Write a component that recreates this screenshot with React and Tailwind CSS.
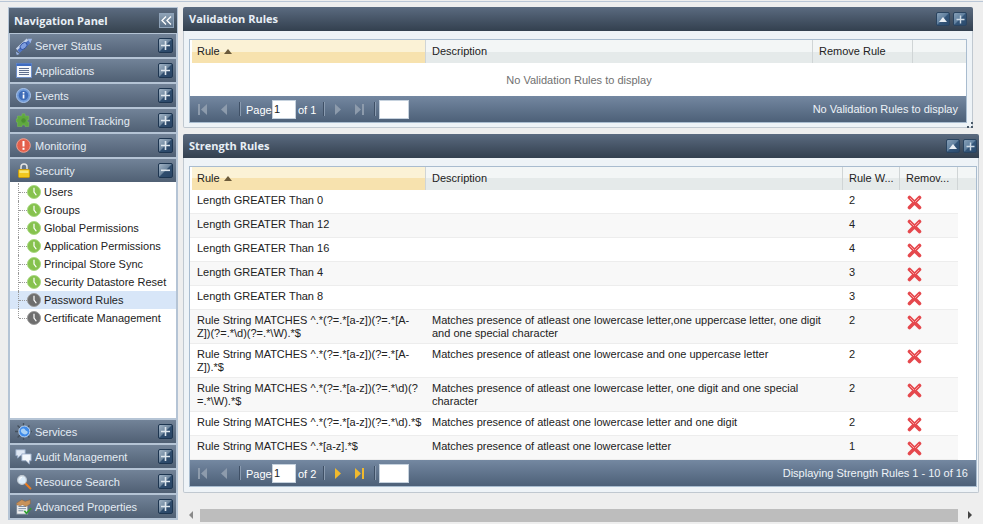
import React from 'react';

const sans = { fontFamily: '"Liberation Sans", Arial, sans-serif' };
const titleFont = { fontFamily: '"Open Sans", sans-serif' };

// little drawings for the accordion headers
const ServerIcon = () => (
  <svg width="18" height="18" viewBox="0 0 20 20">
    <path d="M3 15 L15 4" stroke="#c7d4ea" strokeWidth="6" />
    <path d="M4 16 L16 5" stroke="#4f74c4" strokeWidth="4" />
    <ellipse cx="9.500" cy="10" rx="3" ry="4.500" transform="rotate(45 9.500 10)" fill="#7f9ee0" stroke="#2e4f9e" />
    <path d="M14 2 L19 2 L17 7 Z" fill="#9db7ea" />
    <path d="M1 16 L5 19 L2 20 Z" fill="#9db7ea" />
  </svg>
);
const AppsIcon = () => (
  <svg width="16" height="15" viewBox="0 0 16 15">
    <rect x="0.500" y="0.500" width="15" height="14" fill="#f4f7fc" stroke="#6f8fc8" />
    <rect x="0.500" y="0.500" width="15" height="2.500" fill="#3f6cc0" />
    <path d="M3 5.500H13M3 7.500H13M3 9.500H13M3 11.500H13" stroke="#5f6f8f" />
  </svg>
);
const InfoIcon = () => (
  <svg width="15" height="15" viewBox="0 0 15 15">
    <circle cx="7.500" cy="7.500" r="7" fill="#6f9ad8" stroke="#a9c4ec" />
    <circle cx="7.500" cy="7.500" r="4.800" fill="#3f6cb8" />
    <rect x="6.700" y="6.500" width="1.700" height="4" fill="#fff" />
    <rect x="6.700" y="4" width="1.700" height="1.600" fill="#fff" />
  </svg>
);
const PuzzleIcon = () => (
  <svg width="15" height="15" viewBox="0 0 20 20">
    <path d="M8 1h4v3h5v5h-2v3h2v6H12v-2H8v2H2v-6H0V8h2V4h6z" fill="#5fa83f" stroke="#7fc05a" strokeWidth="0.600" />
    <circle cx="10" cy="10" r="3" fill="#4c9030" />
  </svg>
);
const AlertIcon = () => (
  <svg width="15" height="15" viewBox="0 0 15 15">
    <circle cx="7.500" cy="7.500" r="6.800" fill="#e4604c" stroke="#f2a090" />
    <rect x="6.500" y="3" width="2" height="5.500" fill="#fff" />
    <rect x="6.500" y="9.800" width="2" height="2" fill="#fff" />
  </svg>
);
const LockIcon = () => (
  <svg width="12" height="15" viewBox="0 0 12 15">
    <path d="M3 7V4a3 3 0 0 1 6 0v3" fill="none" stroke="#e4e4e4" strokeWidth="1.500" />
    <rect x="0.500" y="6.500" width="11" height="8" rx="1" fill="#f2c81e" stroke="#c89a10" />
    <rect x="1.500" y="7.500" width="9" height="2.500" fill="#fae878" />
  </svg>
);
const GlobeIcon = () => (
  <svg width="17" height="17" viewBox="0 0 20 20">
    <path d="M3 3L17 17M17 3L3 17M10 0V20M0 10H20" stroke="#44505e" strokeWidth="1.600" />
    <circle cx="11" cy="10" r="6.500" fill="#3f8ae8" stroke="#d5e6fa" />
    <path d="M7 8c2-2 4-2 5 0s3 1 3 3-3 3-5 2-4-3-3-5z" fill="#a8d0f5" />
  </svg>
);
const ChatIcon = () => (
  <svg width="17" height="17" viewBox="0 0 20 20">
    <path d="M1 2h11v7H6l-3 3V9H1z" fill="#dfe8f4" stroke="#93a8c4" />
    <path d="M8 7h11v8h-2v4l-4-4H8z" fill="#f4f8fc" stroke="#93a8c4" />
  </svg>
);
const SearchIcon = () => (
  <svg width="16" height="16" viewBox="0 0 20 20">
    <path d="M11 11L18 18" stroke="#e87a20" strokeWidth="2.600" strokeLinecap="round" />
    <circle cx="7.500" cy="7.500" r="5.500" fill="#dcecfa" stroke="#c0c8d0" strokeWidth="1.400" />
    <path d="M4.500 7a3.500 3.500 0 0 1 3-3" stroke="#fff" strokeWidth="1.400" fill="none" />
  </svg>
);
const AdvancedIcon = () => (
  <svg width="17" height="17" viewBox="0 0 20 20">
    <rect x="2" y="6" width="13" height="13" fill="#f2f2f2" stroke="#7a8a9a" />
    <path d="M4 10h9M4 12.500h9M4 15h6" stroke="#6a7f9a" />
    <path d="M2 6l6-4 4 2 6-2v5l-5 3-4-2-3 1-4-1z" fill="#c8925a" stroke="#8a5a30" strokeWidth="0.500" />
    <path d="M11 15l2.500 3L19 12" fill="none" stroke="#30a030" strokeWidth="2" />
  </svg>
);

const ExpandBtn = ({ minus }) => (
  <span className="flex h-[15px] w-[15px] items-center justify-center rounded-[2px] border border-[#1d3550] bg-[linear-gradient(135deg,#a2b4c6_0%,#6e869e_48%,#2f4d6e_52%,#2a4566_100%)]">
    <svg width="9" height="9" viewBox="0 0 9 9">
      {minus ? <rect x="0" y="3.500" width="9" height="1.600" fill="#dfe7ee" /> : <path d="M3.700 0h1.600v3.700H9v1.600H5.300V9H3.700V5.300H0V3.700h3.700z" fill="#dfe7ee" />}
    </svg>
  </span>
);

const NavHeader = ({ icon: Icon, label, open }) => (
  <div className="flex h-[23px] items-center bg-gradient-to-b from-[#728398] to-[#506074] pl-[3px] pr-[3px]">
    <span className="flex w-[21px] shrink-0 items-center justify-center"><Icon /></span>
    <span className="ml-[1px] flex-1 pt-[2px] text-[11px] text-[#e4ecf4]">{label}</span>
    <ExpandBtn minus={open} />
  </div>
);

const ClockIcon = ({ gray }) => (
  <svg width="14" height="14" viewBox="0 0 15 15" className="shrink-0">
    <circle cx="7.500" cy="7.500" r="7" fill={gray ? '#6e6e6e' : '#86c24e'} stroke={gray ? '#9a9a9a' : '#a8d880'} />
    <path d="M7.500 3V7.500L10 11" fill="none" stroke="#fff" strokeWidth="1.300" />
  </svg>
);

const TreeRow = ({ label, gray, active, last }) => (
  <div className={`relative flex h-[18px] items-center pl-[9px] ${active ? 'bg-[#d8e6f8]' : ''}`}>
    <span className={`absolute left-[8px] top-0 border-l border-dotted border-[#999] ${last ? 'h-[9px]' : 'h-[18px]'}`} />
    <span className="w-[8px] border-t border-dotted border-[#999]" />
    <ClockIcon gray={gray} />
    <span className="ml-[3px] text-[11px] text-[#222]">{label}</span>
  </div>
);

const HeadCell = ({ label, sorted, w }) => (
  <div className={`flex h-[23px] items-center border-r border-[#d0d5d6] text-[11px] text-[#222] ${w} ${sorted ? 'bg-[linear-gradient(#fbf2d6_50%,#f7e2ae_50%)] pl-[5px]' : 'bg-[linear-gradient(#f3f6f6_50%,#e5eaea_50%)] pl-[6px]'}`}>
    {label}
    {sorted && <svg width="8" height="5" viewBox="0 0 8 5" className="ml-[4px]"><path d="M0 5L4 0L8 5Z" fill="#6b5a3a" /></svg>}
  </div>
);

const Arrow = ({ dir, bar, color }) => (
  <svg width="11" height="13" viewBox="0 0 11 13" className="shrink-0">
    {dir === 'left' ? <path d="M9 1V12L3 6.500Z" fill={color} /> : <path d="M2 1V12L8 6.500Z" fill={color} />}
    {bar && (dir === 'left' ? <rect x="0" y="1" width="2" height="11" fill={color} /> : <rect x="9" y="1" width="2" height="11" fill={color} />)}
  </svg>
);

const Sep = () => <span className="h-[14px] w-[1px] shrink-0 bg-[#3f5066] shadow-[1px_0_0_#8a9bb0]" />;

const Pager = ({ pages, status, nextOn }) => {
  const off = '#8d9bac';
  const on = '#f0b92e';
  return (
    <div className="flex h-[26px] items-center bg-gradient-to-b from-[#7488a1] to-[#4d6078] pl-[8px] pr-[8px] text-[11px] text-white">
      <Arrow dir="left" bar color={off} />
      <span className="w-[9px]" />
      <Arrow dir="left" color={off} />
      <span className="w-[10px]" />
      <Sep />
      <span className="ml-[6px] w-[25px] pt-[2px]">Page</span>
      <span className="ml-[1px] flex h-[19px] w-[24px] items-center border border-[#c6d2de] bg-white pl-[1px] text-[#222]">1</span>
      <span className="ml-[2px] w-[19px] pt-[2px]">of {pages}</span>
      <span className="w-[6px]" />
      <Sep />
      <span className="w-[9px]" />
      <Arrow dir="right" color={nextOn ? on : off} />
      <span className="w-[9px]" />
      <Arrow dir="right" bar color={nextOn ? on : off} />
      <span className="w-[10px]" />
      <Sep />
      <span className="ml-[4px] h-[19px] w-[30px] border border-[#c6d2de] bg-white" />
      <span className="flex-1 text-right text-[#eef3f8]">{status}</span>
    </div>
  );
};

const RemoveX = () => (
  <svg width="15" height="15" viewBox="0 0 15 15" className="ml-[7px] mt-[5px]">
    <path d="M2.500 2.500L12.500 12.500M12.500 2.500L2.500 12.500" stroke="#e5484d" strokeWidth="3.600" strokeLinecap="round" />
    <path d="M3 3L7 7M12 3L8 7" stroke="#f7a0a0" strokeWidth="1" />
  </svg>
);

const PanelBtn = ({ plus }) => (
  <span className="flex h-[14px] w-[14px] items-center justify-center rounded-[2px] border border-[#2a4460] bg-[linear-gradient(135deg,#87a0b8_0%,#5f7f9e_48%,#34567a_52%,#2b4a6c_100%)]">
    {plus
      ? <svg width="9" height="9" viewBox="0 0 9 9"><path d="M3.800 0.500h1.400v3.300h3.300v1.400H5.200v3.300H3.800V5.200H0.500V3.800h3.300z" fill="#cfdbe6" /></svg>
      : <svg width="8" height="5" viewBox="0 0 8 5"><path d="M0 5L4 0L8 5Z" fill="#e8eef4" /></svg>}
  </span>
);

const PanelHead = ({ title, pr }) => (
  <div className={`flex h-[24px] items-center rounded-t-[2px] bg-gradient-to-b from-[#5b6b80] to-[#33404f] pl-[6px] ${pr}`}>
    <span className="flex-1 text-[11px] font-bold text-[#e8eff6]" style={titleFont}>{title}</span>
    <span className="flex gap-[3px]"><PanelBtn /><PanelBtn plus /></span>
  </div>
);

const Grip = () => (
  <svg width="6" height="6" viewBox="0 0 6 6" className="absolute bottom-0 right-0">
    <path d="M4 0h2v2H4zM0 4h2v2H0zM4 4h2v2H4z" fill="#4a5a6a" />
  </svg>
);

const rules = [
  ['Length GREATER Than 0', '', '2', 24],
  ['Length GREATER Than 12', '', '4', 24],
  ['Length GREATER Than 16', '', '4', 24],
  ['Length GREATER Than 4', '', '3', 24],
  ['Length GREATER Than 8', '', '3', 24],
  ['Rule String MATCHES ^.*(?=.*[a-z])(?=.*[A-\nZ])(?=.*\\d)(?=.*\\W).*$', 'Matches presence of atleast one lowercase letter,one uppercase letter, one digit\nand one special character', '2', 34],
  ['Rule String MATCHES ^.*(?=.*[a-z])(?=.*[A-\nZ]).*$', 'Matches presence of atleast one lowercase and one uppercase letter', '2', 34],
  ['Rule String MATCHES ^.*(?=.*[a-z])(?=.*\\d)(?\n=.*\\W).*$', 'Matches presence of atleast one lowercase letter, one digit and one special\ncharacter', '2', 34],
  ['Rule String MATCHES ^.*(?=.*[a-z])(?=.*\\d).*$', 'Matches presence of atleast one lowercase letter and one digit', '2', 24],
  ['Rule String MATCHES ^.*[a-z].*$', 'Matches presence of atleast one lowercase letter', '1', 24],
];

const navTop = [
  [ServerIcon, 'Server Status'],
  [AppsIcon, 'Applications'],
  [InfoIcon, 'Events'],
  [PuzzleIcon, 'Document Tracking'],
  [AlertIcon, 'Monitoring'],
];
const navBottom = [
  [GlobeIcon, 'Services'],
  [ChatIcon, 'Audit Management'],
  [SearchIcon, 'Resource Search'],
  [AdvancedIcon, 'Advanced Properties'],
];
const tree = ['Users', 'Groups', 'Global Permissions', 'Application Permissions', 'Principal Store Sync', 'Security Datastore Reset', 'Password Rules', 'Certificate Management'];

export default function App() {
  return (
    <div className="h-[524px] w-[983px] overflow-hidden bg-[#eeeeee] pt-[1px]" style={sans}>
      <div className="h-[1px] bg-[#b9c6d6]" />
      <div className="flex pt-[5px]">
        {/* Navigation panel */}
        <aside className="ml-[8px] flex h-[513px] w-[170px] shrink-0 flex-col border border-[#b5c4d5] bg-[#b5c4d5]">
          <div className="flex h-[25px] shrink-0 items-center bg-gradient-to-b from-[#5b6b80] to-[#36434f] pl-[5px] pr-[3px]">
            <span className="flex-1 pt-[2px] text-[11px] font-bold text-[#e8eff6]" style={titleFont}>Navigation Panel</span>
            <span className="flex h-[15px] w-[15px] items-center justify-center border border-[#8ea2b8] bg-gradient-to-b from-[#8ea2b6] to-[#5b7088]">
              <svg width="11" height="9" viewBox="0 0 11 9"><path d="M5 0.500L1 4.500L5 8.500M10 0.500L6 4.500L10 8.500" fill="none" stroke="#fff" strokeWidth="1.300" /></svg>
            </span>
          </div>
          <div className="flex flex-1 flex-col gap-[2px] px-[1px] pt-[1px]">
            {navTop.map(([Icon, label]) => <NavHeader key={label} icon={Icon} label={label} />)}
            <div>
              <NavHeader icon={LockIcon} label="Security" open />
              <div className="h-[236px] bg-white pt-[1px]">
                {tree.map((t, i) => (
                  <TreeRow key={t} label={t} gray={i > 5} active={t === 'Password Rules'} last={i === tree.length - 1} />
                ))}
              </div>
            </div>
            {navBottom.map(([Icon, label]) => <NavHeader key={label} icon={Icon} label={label} />)}
          </div>
        </aside>

        {/* Right side */}
        <main className="ml-[5px] min-w-0 flex-1">
          {/* Validation rules */}
          <section className="relative w-[790px]">
            <PanelHead title="Validation Rules" pr="pr-[6px]" />
            <div className="rounded-b-[2px] border-x border-b border-[#c0c8d0] bg-[#eef3f7] pb-[4px] pl-[5px] pt-[8px]">
              <div className="w-[778px] border border-[#a9bccf] bg-white">
                <div className="flex pl-[2px]">
                  <HeadCell label="Rule" sorted w="w-[234px]" />
                  <HeadCell label="Description" w="w-[387px]" />
                  <HeadCell label="Remove Rule" w="w-[100px]" />
                  <div className="h-[23px] flex-1 bg-[linear-gradient(#f3f6f6_50%,#e5eaea_50%)]" />
                </div>
                <div className="flex h-[33px] items-center justify-center pl-[2px] pt-[2px] text-[11px] text-[#707070]">No Validation Rules to display</div>
                <Pager pages="1" status="No Validation Rules to display" />
              </div>
            </div>
            <Grip />
          </section>

          {/* Strength rules */}
          <section className="relative mt-[6px] w-[796px]">
            <PanelHead title="Strength Rules" pr="pr-[2px]" />
            <div className="rounded-b-[2px] border-x border-b border-[#c0c8d0] bg-[#eef3f7] pb-[5px] pl-[5px] pt-[8px]">
              <div className="w-[788px] border border-[#a9bccf] bg-white text-[11px] text-[#222]">
                <div className="flex pl-[2px]">
                  <HeadCell label="Rule" sorted w="w-[234px]" />
                  <HeadCell label="Description" w="w-[417px]" />
                  <HeadCell label="Rule W..." w="w-[57px]" />
                  <HeadCell label="Remov..." w="w-[58px]" />
                  <div className="h-[23px] flex-1 bg-[linear-gradient(#f3f6f6_50%,#e5eaea_50%)]" />
                </div>
                {rules.map(([rule, desc, weight, h], i) => (
                  <div
                    key={rule}
                    className={`grid w-[768px] grid-cols-[236px_417px_57px_58px] border-b border-[#ededed] leading-[13px] ${i % 2 ? 'bg-[#f8f8f8]' : 'bg-white'}`}
                    style={{ height: h }}
                  >
                    <div className="whitespace-pre-line pl-[7px] pt-[4px]">{rule}</div>
                    <div className="whitespace-pre-line pl-[6px] pt-[4px]">{desc}</div>
                    <div className="pl-[6px] pt-[4px]">{weight}</div>
                    <div><RemoveX /></div>
                  </div>
                ))}
                <Pager pages="2" status="Displaying Strength Rules 1 - 10 of 16" nextOn />
              </div>
            </div>
          </section>

          {/* Horizontal scrollbar */}
          <div className="mt-[15px] flex h-[14px] items-center">
            <svg width="17" height="14" viewBox="0 0 17 14" className="shrink-0"><path d="M10 3V11L6 7Z" fill="#8a8a8a" /></svg>
            <div className="h-[13px] w-[758px] bg-[#bdbdbd]" />
            <svg width="25" height="14" viewBox="0 0 25 14" className="shrink-0"><path d="M10 3V11L14 7Z" fill="#444" /></svg>
          </div>
        </main>
      </div>
    </div>
  );
}
